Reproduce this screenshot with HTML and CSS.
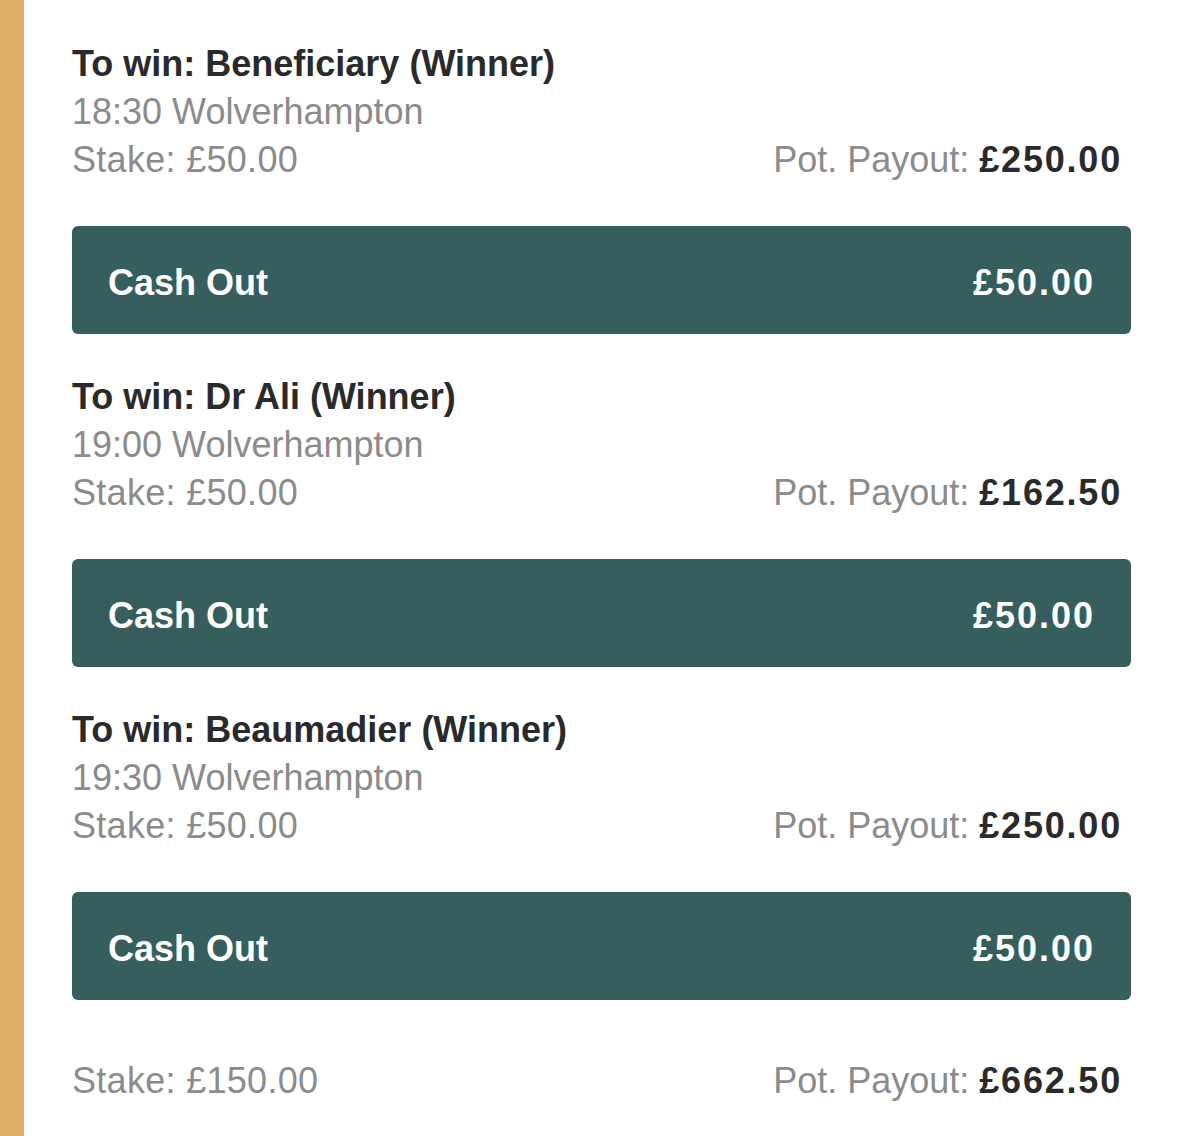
FILE: index.html
```html
<!DOCTYPE html>
<html lang="en">
<head>
<meta charset="utf-8">
<title>Bet slip</title>
<link rel="stylesheet" href="styles.css">
</head>
<body>
<div class="page">
  <div class="accent"></div>
  <div class="content">
    <div class="bet">
      <div class="title">To win: Beneficiary (Winner)</div>
      <div class="meta">18:30 Wolverhampton</div>
      <div class="row"><span class="stake">Stake: £50.00</span><span class="payout">Pot. Payout: <b>£250.00</b></span></div>
      <button class="cashout"><span>Cash Out</span><span class="amt">£50.00</span></button>
    </div>
    <div class="bet">
      <div class="title">To win: Dr Ali (Winner)</div>
      <div class="meta">19:00 Wolverhampton</div>
      <div class="row"><span class="stake">Stake: £50.00</span><span class="payout">Pot. Payout: <b>£162.50</b></span></div>
      <button class="cashout"><span>Cash Out</span><span class="amt">£50.00</span></button>
    </div>
    <div class="bet">
      <div class="title">To win: Beaumadier (Winner)</div>
      <div class="meta">19:30 Wolverhampton</div>
      <div class="row"><span class="stake">Stake: £50.00</span><span class="payout">Pot. Payout: <b>£250.00</b></span></div>
      <button class="cashout"><span>Cash Out</span><span class="amt">£50.00</span></button>
    </div>
    <div class="row total"><span class="stake">Stake: £150.00</span><span class="payout">Pot. Payout: <b>£662.50</b></span></div>
  </div>
</div>
</body>
</html>
```

FILE: styles.css
```css
html, body {
  margin: 0;
  padding: 0;
  background: #ffffff;
}
body {
  font-family: "Liberation Sans", Arial, sans-serif;
  font-size: 36px;
  color: #8b8b8b;
}
.page {
  display: flex;
  min-height: 1136px;
}
.accent {
  width: 24px;
  flex: 0 0 24px;
  background: #e0b068;
}
.content {
  flex: 1;
  padding: 40px 48px 0 48px;
  display: flex;
  flex-direction: column;
}
.bet {
  display: flex;
  flex-direction: column;
  margin-bottom: 39px;
}
.title {
  font-weight: bold;
  color: #2a2a2a;
  line-height: 48px;
}
.meta {
  line-height: 48px;
}
.row {
  display: flex;
  justify-content: space-between;
  line-height: 48px;
  padding-right: 9px;
}
.stake,
.payout {
  white-space: nowrap;
}
.stake {
  letter-spacing: 0.3px;
}
.payout b {
  color: #2a2a2a;
  font-weight: bold;
  letter-spacing: 1.8px;
}
.cashout {
  margin-top: 42px;
  height: 108px;
  border: none;
  border-radius: 6px;
  background: #365e5c;
  color: #ffffff;
  font-family: inherit;
  font-size: 36px;
  font-weight: bold;
  display: flex;
  align-items: center;
  justify-content: space-between;
  padding: 5px 36px 0 36px;
}
.cashout .amt {
  letter-spacing: 2px;
}
.total {
  margin-top: 18px;
}
```
